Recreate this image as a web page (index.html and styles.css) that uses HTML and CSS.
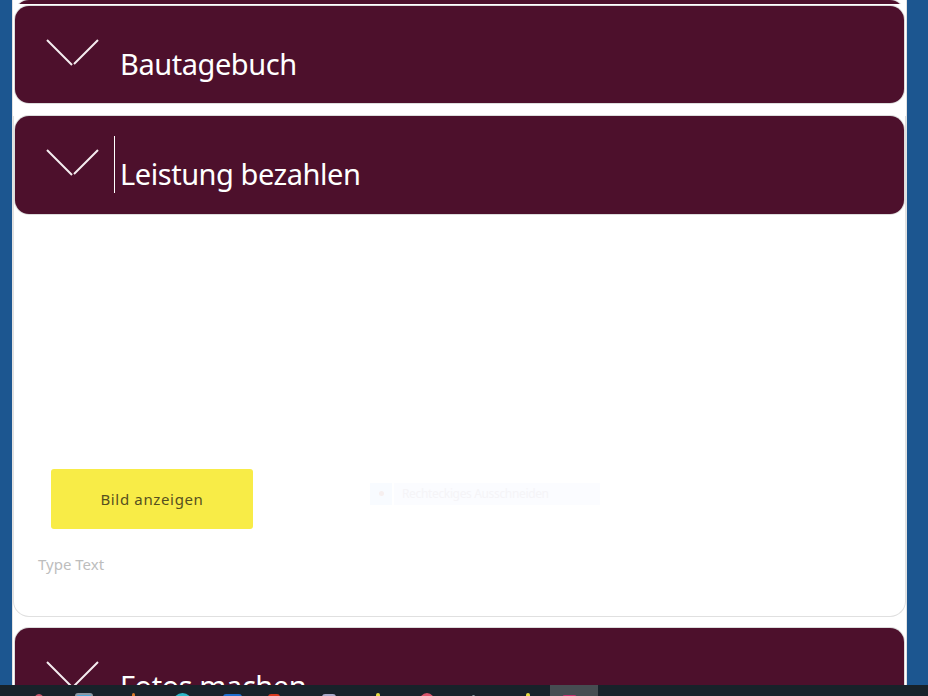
FILE: index.html
```html
<!DOCTYPE html>
<html lang="de">
<head>
    <meta charset="UTF-8">
    <meta name="viewport" content="width=device-width, initial-scale=1.0">
    <title>Leistung bezahlen</title>
    <link rel="stylesheet" href="styles.css">
</head>
<body>
    <div class="screen">
        <div class="page">
            <!-- Rest der Karte darueber, nur unten angeschnitten -->
            <div class="prev-card"><div class="bar bar-cut"></div></div>

            <div class="card card-first">
                <div class="bar">
                    <svg class="chevron" viewBox="0 0 54 28"><path d="M1 1 L26 26 M28 25 L52 1"/></svg>
                    <h2>Bautagebuch</h2>
                </div>
            </div>

            <div class="card card-open">
                <div class="bar">
                    <svg class="chevron" viewBox="0 0 54 28"><path d="M1 1 L26 26 M28 25 L52 1"/></svg>
                    <span class="caret"></span>
                    <h2>Leistung bezahlen</h2>
                </div>
                <div class="card-body">
                    <div class="actions">
                        <button type="button" class="yellow-btn">Bild anzeigen</button>
                        <div class="ghost-tool">
                            <span class="ghost-icon"><i></i></span>
                            <span class="ghost-label">Rechteckiges Ausschneiden</span>
                        </div>
                    </div>
                    <div class="type-text">Type Text</div>
                </div>
            </div>

            <div class="card">
                <div class="bar">
                    <svg class="chevron" viewBox="0 0 54 28"><path d="M1 1 L26 26 M28 25 L52 1"/></svg>
                    <h2>Fotos machen</h2>
                </div>
            </div>
        </div>
    </div>

    <div class="taskbar">
        <div class="tb-slot"><span class="tb-icon tb-red"></span></div>
        <div class="tb-slot"><span class="tb-icon tb-grey"></span></div>
        <div class="tb-slot"><span class="tb-icon tb-orange"></span></div>
        <div class="tb-slot"><span class="tb-icon tb-cyan"></span></div>
        <div class="tb-slot"><span class="tb-icon tb-blue"></span></div>
        <div class="tb-slot"><span class="tb-icon tb-red2"></span></div>
        <div class="tb-slot"><span class="tb-icon tb-lilac"></span></div>
        <div class="tb-slot"><span class="tb-icon tb-yellow"></span></div>
        <div class="tb-slot"><span class="tb-icon tb-pink"></span></div>
        <div class="tb-slot"><span class="tb-icon tb-grey2"></span></div>
        <div class="tb-slot"><span class="tb-icon tb-yellow2"></span></div>
        <div class="tb-slot tb-active"><span class="tb-icon tb-mag"></span></div>
    </div>
</body>
</html>
```

FILE: styles.css
```css
html, body {
    margin: 0;
    height: 100%;
    overflow: hidden;
}
body {
    font-family: "Noto Sans", "Open Sans", sans-serif;
    background-color: #1c5690;
}
.screen {
    height: 685px;
    overflow: hidden;
}
.page {
    width: 895px;
    height: 685px;
    margin-left: 12px;
    box-sizing: border-box;
    background-color: #ffffff;
    border-left: 1px solid #e2e2e2;
    border-right: 1px solid #e2e2e2;
    padding: 0 2px;
}
.prev-card {
    height: 4px;
    margin-bottom: 2px;
    overflow: hidden;
    position: relative;
}
.bar-cut {
    position: absolute;
    left: 0;
    right: 0;
    bottom: 0;
    height: 98px;
}
.card {
    margin-bottom: 12px;
}
.card-first {
    margin-bottom: 13px;
}
.card-first .bar {
    height: 97px;
}
.bar {
    height: 98px;
    box-sizing: border-box;
    background-color: #4d102c;
    border-radius: 14px;
    box-shadow: 0 0 0 1px #dcdcdc;
    color: #ffffff;
    position: relative;
    display: flex;
    padding-left: 105px;
    padding-top: 38px;
}
.bar h2 {
    margin: 0;
    font-size: 29px;
    font-weight: 400;
    line-height: 40px;
    letter-spacing: -0.45px;
}
.chevron {
    position: absolute;
    left: 31px;
    top: 33px;
    width: 54px;
    height: 28px;
    fill: none;
    stroke: #f4ecef;
    stroke-width: 2;
}
.caret {
    position: absolute;
    left: 99px;
    top: 20px;
    width: 1px;
    height: 57px;
    background-color: #ffffff;
}
.card-open {
    margin-left: -2px;
    margin-right: -2px;
    margin-bottom: 11px;
    height: 501px;
    box-sizing: border-box;
    border: 1px solid #e0e0e0;
    border-top: none;
    border-radius: 0 0 16px 16px;
    padding: 0 1px;
}
.card-body {
    padding: 255px 0 0 36px;
}
.actions {
    display: flex;
    align-items: center;
}
.yellow-btn {
    width: 202px;
    height: 60px;
    border: none;
    border-radius: 3px;
    background-color: #f8ec47;
    color: #55501f;
    font-family: "Noto Sans", sans-serif;
    font-size: 15px;
    letter-spacing: 0.65px;
}
.ghost-tool {
    display: flex;
    gap: 2px;
    margin-left: 117px;
    margin-top: -11px;
    height: 22px;
}
.ghost-icon {
    width: 22px;
    background-color: #f8fbff;
    display: flex;
    align-items: center;
    justify-content: center;
}
.ghost-icon i {
    width: 5px;
    height: 5px;
    border-radius: 50%;
    background-color: #f6efef;
}
.ghost-label {
    width: 206px;
    padding-left: 8px;
    box-sizing: border-box;
    background-color: #fbfcff;
    color: #f5f4f7;
    font-size: 12px;
    line-height: 22px;
    letter-spacing: -0.35px;
    white-space: nowrap;
}
.type-text {
    margin: 24px 0 0 -13px;
    font-size: 15px;
    line-height: 22px;
    color: #bdbdbd;
}
.taskbar {
    height: 11px;
    padding-left: 22px;
    display: flex;
    background-color: #18222a;
    overflow: hidden;
}
.tb-slot {
    width: 48px;
    height: 11px;
    flex: none;
    display: flex;
    overflow: hidden;
}
.tb-active {
    background-color: #464d52;
}
.tb-icon {
    display: block;
    flex: none;
    width: 18px;
    height: 18px;
    border-radius: 3px;
}
.tb-red { margin: 9px 0 0 11px; width: 12px; border-radius: 50%; background-color: #c9566a; }
.tb-grey { margin: 8px 0 0 5px; box-sizing: border-box; border: 2px solid #8a98a4; background-color: #4ea6d8; }
.tb-orange { margin: 8px 0 0 14px; width: 3px; background-color: #d9792a; }
.tb-cyan { margin: 8px 0 0 7px; width: 19px; border-radius: 50%; background-color: #2cb9c9; }
.tb-blue { margin: 9px 0 0 9px; width: 19px; background-color: #1e6fd0; }
.tb-red2 { margin: 9px 0 0 6px; width: 12px; background-color: #d8391f; }
.tb-lilac { margin: 9px 0 0 12px; width: 14px; background-color: #a9a9c9; }
.tb-yellow { margin: 8px 0 0 18px; width: 4px; border-radius: 2px; background-color: #e8dc40; }
.tb-pink { margin: 8px 0 0 13px; width: 16px; border-radius: 50%; background-color: #d9536a; }
.tb-grey2 { margin: 10px 0 0 18px; width: 3px; background-color: #8a9aa2; }
.tb-yellow2 { margin: 8px 0 0 24px; width: 4px; border-radius: 2px; background-color: #e8dc40; }
.tb-mag { margin: 10px 0 0 12px; width: 15px; background-color: #c4306e; }
```
